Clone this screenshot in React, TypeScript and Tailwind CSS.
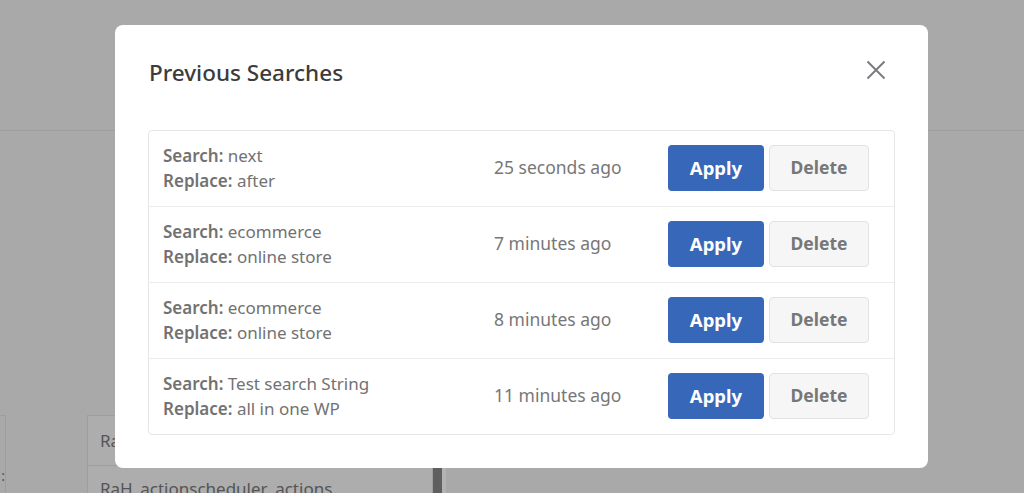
const searches = [
  { search: 'next', replace: 'after', time: '25 seconds ago' },
  { search: 'ecommerce', replace: 'online store', time: '7 minutes ago' },
  { search: 'ecommerce', replace: 'online store', time: '8 minutes ago' },
  { search: 'Test search String', replace: 'all in one WP', time: '11 minutes ago' },
];

const App = () => {
  return (
    <div className="relative h-[493px] w-full overflow-hidden bg-[#a9a9a9] font-['Noto_Sans',sans-serif]">
      {/* page under the overlay */}
      <div className="h-[131px] border-b border-[#9e9e9e]"></div>
      <div className="flex pt-[284px]">
        <div className="w-[6px] h-[80px] border-r border-t border-[#9e9e9e] text-[#555] text-sm flex items-end justify-end leading-none pb-3">:</div>
        <div className="ml-[81px] w-[346px] border border-[#9e9e9e] bg-[#adadad] text-[#555] text-[17px]">
          <div className="h-[50px] flex items-center px-3 border-b border-[#9e9e9e]">Ra</div>
          <div className="h-[40px] flex items-center px-3 mt-[3px]">RaH_actionscheduler_actions</div>
        </div>
        <div className="mt-[53px] w-[9px] h-[40px] bg-[#5f5f5f]"></div>
        <div className="mt-[53px] w-[4px] h-[40px] bg-[#b3b3b3]"></div>
      </div>

      {/* modal */}
      <div className="absolute left-[115px] top-[25px] w-[813px] h-[443px] bg-white rounded-lg px-[33px] pt-[30px]">
        <div className="flex items-center justify-between h-[36px]">
          <h2 className="text-[22.5px] font-medium text-[#3c3c3c] pl-px">Previous Searches</h2>
          <button className="text-[#7b7b80] mr-[9px] -mt-[7px]">
            <svg width="20" height="20" viewBox="0 0 20 20" fill="none" stroke="currentColor" strokeWidth="2">
              <path d="M1.5 1.5L18.5 18.5M18.5 1.5L1.5 18.5" />
            </svg>
          </button>
        </div>
        <div className="mt-[39px] border border-[#e6e6e6] rounded-[4px]">
          {searches.map((s, i) => (
            <div
              key={i}
              className={`flex items-center pl-[14px] pr-[25px] pb-[2px] ${i < searches.length - 1 ? 'h-[76px] border-b border-[#ececec]' : 'h-[75px]'}`}
            >
              <div className="w-[331px] text-[17px] leading-[25px] text-[#727272]">
                <div><span className="font-semibold">Search:</span> {s.search}</div>
                <div><span className="font-semibold">Replace:</span> {s.replace}</div>
              </div>
              <div className="flex-1 text-[17.5px] text-[#777]">{s.time}</div>
              <button className="w-[96px] h-[46px] rounded-[4px] bg-[#3767b8] text-white font-bold text-[18.5px]">
                Apply
              </button>
              <button className="ml-[5px] w-[100px] h-[46px] rounded-[4px] bg-[#f6f6f6] border border-[#e3e3e3] text-[#777] font-bold text-[17.5px]">
                Delete
              </button>
            </div>
          ))}
        </div>
      </div>
    </div>
  );
};

export default App;
